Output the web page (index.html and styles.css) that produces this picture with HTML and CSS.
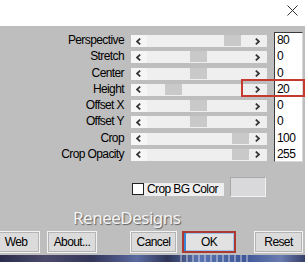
FILE: index.html
```html
<!DOCTYPE html>
<html>
<head>
<meta charset="utf-8">
<link rel="stylesheet" href="styles.css">
</head>
<body>
<div class="win">
  <div class="titlebar">
    <svg class="close" width="11" height="11" viewBox="0 0 11 11"><path d="M0.5 0.5 L10.5 10.5 M10.5 0.5 L0.5 10.5" stroke="#333" stroke-width="1" fill="none"/></svg>
  </div>
  <div class="panel">
    <div class="params">
      <span class="lbl">Perspective</span>
      <div class="sb"><span class="arr arr-l"><svg width="5" height="7" viewBox="0 0 5 7"><path d="M4.2 0.6 L1 3.5 L4.2 6.4" stroke="#333" stroke-width="1.7" fill="none"/></svg></span><div class="track"><div class="thumb" style="margin-left:77px"></div></div><span class="arr arr-r"><svg width="5" height="7" viewBox="0 0 5 7"><path d="M0.8 0.6 L4 3.5 L0.8 6.4" stroke="#333" stroke-width="1.7" fill="none"/></svg></span></div>
      <div class="val first">80</div>

      <span class="lbl">Stretch</span>
      <div class="sb"><span class="arr arr-l"><svg width="5" height="7" viewBox="0 0 5 7"><path d="M4.2 0.6 L1 3.5 L4.2 6.4" stroke="#333" stroke-width="1.7" fill="none"/></svg></span><div class="track"><div class="thumb" style="margin-left:43px"></div></div><span class="arr arr-r"><svg width="5" height="7" viewBox="0 0 5 7"><path d="M0.8 0.6 L4 3.5 L0.8 6.4" stroke="#333" stroke-width="1.7" fill="none"/></svg></span></div>
      <div class="val">0</div>

      <span class="lbl">Center</span>
      <div class="sb"><span class="arr arr-l"><svg width="5" height="7" viewBox="0 0 5 7"><path d="M4.2 0.6 L1 3.5 L4.2 6.4" stroke="#333" stroke-width="1.7" fill="none"/></svg></span><div class="track"><div class="thumb" style="margin-left:43px"></div></div><span class="arr arr-r"><svg width="5" height="7" viewBox="0 0 5 7"><path d="M0.8 0.6 L4 3.5 L0.8 6.4" stroke="#333" stroke-width="1.7" fill="none"/></svg></span></div>
      <div class="val">0</div>

      <span class="lbl">Height</span>
      <div class="sb"><span class="arr arr-l"><svg width="5" height="7" viewBox="0 0 5 7"><path d="M4.2 0.6 L1 3.5 L4.2 6.4" stroke="#333" stroke-width="1.7" fill="none"/></svg></span><div class="track"><div class="thumb" style="margin-left:18px"></div></div><span class="arr arr-r"><svg width="5" height="7" viewBox="0 0 5 7"><path d="M0.8 0.6 L4 3.5 L0.8 6.4" stroke="#333" stroke-width="1.7" fill="none"/></svg></span></div>
      <div class="val">20</div>

      <span class="lbl">Offset X</span>
      <div class="sb"><span class="arr arr-l"><svg width="5" height="7" viewBox="0 0 5 7"><path d="M4.2 0.6 L1 3.5 L4.2 6.4" stroke="#333" stroke-width="1.7" fill="none"/></svg></span><div class="track"><div class="thumb" style="margin-left:43px"></div></div><span class="arr arr-r"><svg width="5" height="7" viewBox="0 0 5 7"><path d="M0.8 0.6 L4 3.5 L0.8 6.4" stroke="#333" stroke-width="1.7" fill="none"/></svg></span></div>
      <div class="val">0</div>

      <span class="lbl">Offset Y</span>
      <div class="sb"><span class="arr arr-l"><svg width="5" height="7" viewBox="0 0 5 7"><path d="M4.2 0.6 L1 3.5 L4.2 6.4" stroke="#333" stroke-width="1.7" fill="none"/></svg></span><div class="track"><div class="thumb" style="margin-left:43px"></div></div><span class="arr arr-r"><svg width="5" height="7" viewBox="0 0 5 7"><path d="M0.8 0.6 L4 3.5 L0.8 6.4" stroke="#333" stroke-width="1.7" fill="none"/></svg></span></div>
      <div class="val">0</div>

      <span class="lbl">Crop</span>
      <div class="sb"><span class="arr arr-l"><svg width="5" height="7" viewBox="0 0 5 7"><path d="M4.2 0.6 L1 3.5 L4.2 6.4" stroke="#333" stroke-width="1.7" fill="none"/></svg></span><div class="track"><div class="thumb" style="margin-left:85px"></div></div><span class="arr arr-r"><svg width="5" height="7" viewBox="0 0 5 7"><path d="M0.8 0.6 L4 3.5 L0.8 6.4" stroke="#333" stroke-width="1.7" fill="none"/></svg></span></div>
      <div class="val">100</div>

      <span class="lbl">Crop Opacity</span>
      <div class="sb"><span class="arr arr-l"><svg width="5" height="7" viewBox="0 0 5 7"><path d="M4.2 0.6 L1 3.5 L4.2 6.4" stroke="#333" stroke-width="1.7" fill="none"/></svg></span><div class="track"><div class="thumb" style="margin-left:85px"></div></div><span class="arr arr-r"><svg width="5" height="7" viewBox="0 0 5 7"><path d="M0.8 0.6 L4 3.5 L0.8 6.4" stroke="#333" stroke-width="1.7" fill="none"/></svg></span></div>
      <div class="val last">255</div>
    </div>

    <div class="opts">
      <span class="chk"></span>
      <span class="chk-lbl">Crop BG Color</span>
      <span class="swatch"></span>
    </div>

    <div class="brand">ReneeDesigns</div>

    <div class="buttons">
      <button class="btn b-web">Web</button>
      <button class="btn b-about">About...</button>
      <button class="btn b-cancel">Cancel</button>
      <button class="btn b-ok">OK</button>
      <button class="btn b-reset">Reset</button>
    </div>

    <div class="mark"></div>
  </div>
  <div class="strip"></div>
</div>
</body>
</html>
```

FILE: styles.css
```css
html, body {
  margin: 0;
  padding: 0;
}
body {
  width: 305px;
  height: 262px;
  overflow: hidden;
  background: #fff;
  font-family: "Liberation Sans", Arial, sans-serif;
  font-size: 12px;
  letter-spacing: -0.6px;
  color: #000;
}
.win {
  display: flex;
  flex-direction: column;
  height: 262px;
}
.titlebar {
  height: 26px;
  background: #fff;
  display: flex;
  justify-content: flex-end;
  align-items: flex-start;
  padding-right: 7px;
  box-sizing: border-box;
}
.close {
  margin-top: 5px;
}
.panel {
  position: relative;
  height: 229px;
  background: #bebebe;
  display: flex;
  flex-direction: column;
}
.params {
  margin-top: 6px;
  display: grid;
  grid-template-columns: 124px 136px 29px;
  column-gap: 7px;
  grid-auto-rows: 16.25px;
}
.lbl {
  text-align: right;
  line-height: 16.25px;
  white-space: nowrap;
}
.sb {
  margin-top: 3px;
  height: 12px;
  display: flex;
  background: #efefef;
}
.arr {
  width: 16px;
  display: flex;
  align-items: center;
  flex: none;
}
.arr-l {
  padding-left: 5px;
  box-sizing: border-box;
  background: #f6f6f6;
}
.arr-r {
  padding-left: 4px;
  box-sizing: border-box;
}
.track {
  flex: 1;
  display: flex;
}
.thumb {
  width: 17px;
  height: 11px;
  background: #c9c9c9;
}
.val {
  background: #fff;
  border-left: 1px solid #3a3a3a;
  border-right: 1px solid #d8d8d8;
  line-height: 16.25px;
  padding-left: 2px;
}
.val.first {
  border-top: 1px solid #3a3a3a;
  line-height: 15.25px;
}
.val.last {
  border-bottom: 1px solid #d8d8d8;
}
.opts {
  margin-top: 15px;
  height: 20px;
  display: flex;
  align-items: center;
  padding-left: 132px;
}
.chk {
  width: 10px;
  height: 10px;
  background: #fff;
  border: 1px solid #222;
  margin-top: 4px;
}
.chk-lbl {
  background: #eeeeee;
  height: 13px;
  line-height: 13px;
  width: 77px;
  padding-left: 3px;
  margin-top: 4px;
}
.swatch {
  margin-left: 6px;
  width: 34px;
  height: 18px;
  background: #d9d9dc;
  border: 1px solid;
  border-color: #a8a8a8 #f2f2f2 #f2f2f2 #a8a8a8;
}
.brand {
  margin-top: 11px;
  height: 20px;
  line-height: 20px;
  padding-left: 73px;
  font-family: "Noto Sans", "Open Sans", sans-serif;
  font-size: 17px;
  letter-spacing: -0.5px;
  color: #f4f4f4;
  text-shadow: 1px 1px 1px #5e5e5e;
}
.buttons {
  margin-top: 3px;
  display: flex;
  height: 22px;
}
.btn {
  font-family: "Liberation Sans", Arial, sans-serif;
  font-size: 12px;
  letter-spacing: -0.6px;
  color: #000;
  height: 22px;
  padding: 0;
  background: #dbdbdb;
  border: 1px solid #f3f3f3;
  box-shadow: 0 0 0 1px #b4b4b4 inset;
  flex: none;
}
.b-web {
  margin-left: -8px;
  width: 48px;
}
.b-about {
  margin-left: 7px;
  width: 50px;
}
.b-cancel {
  margin-left: 33px;
  width: 47px;
}
.b-ok {
  margin-left: 5px;
  width: 54px;
  border: 2px solid #ad3a31;
  background: #e2e2e2;
  box-shadow: 2px 0 0 0 #3a86d6 inset, 0 0 0 1px #9cc4ea inset;
}
.b-reset {
  margin-left: 18px;
  width: 49px;
}
.mark {
  position: absolute;
  left: 241px;
  top: 53px;
  width: 60px;
  height: 14px;
  border: 2px solid #c53a2f;
}
.strip {
  flex: 1;
  background:
    repeating-linear-gradient(90deg, rgba(255,255,255,0.35) 0 2px, rgba(0,0,0,0) 2px 6px) 180px 0 / 70px 100% no-repeat,
    linear-gradient(90deg, #2b2d4c 0, #4b4a6c 15%, #34365a 30%, #5a6aa0 45%, #2e3558 55%, #5b74b2 65%, #3e5798 80%, #6a7bb0 92%, #35406a 100%);
}
```
